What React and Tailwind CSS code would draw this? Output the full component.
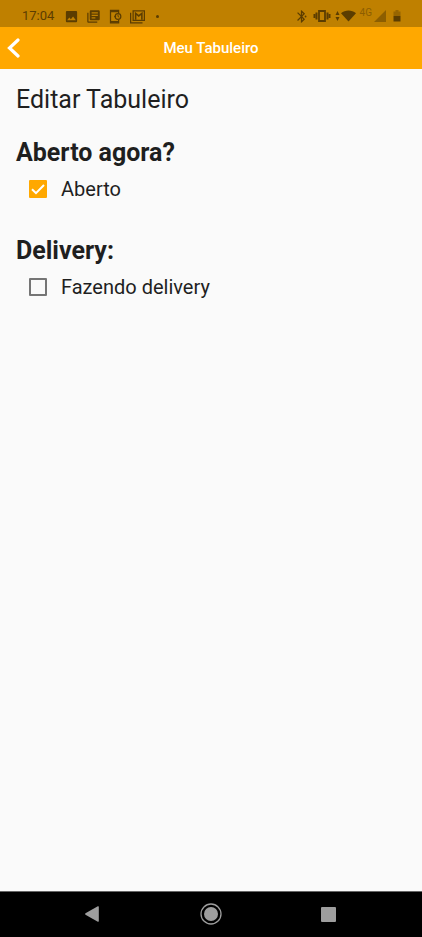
import { useState } from 'react'

function NotificationIcons() {
  return (
    <div className="flex items-center gap-[7px]">
      <svg className="h-[15px] w-[15px]" viewBox="0 0 24 24" fill="currentColor" aria-hidden="true">
        <path d="M21 19V5c0-1.1-.9-2-2-2H5c-1.1 0-2 .9-2 2v14c0 1.1.9 2 2 2h14c1.1 0 2-.9 2-2zM8.500 13.500l2.500 3.010L14.500 12l4.500 6H5l3.500-4.500z" />
      </svg>
      <svg className="h-[15px] w-[15px]" viewBox="0 0 24 24" fill="currentColor" aria-hidden="true">
        <path d="M4 6H2v14c0 1.1.9 2 2 2h14v-2H4V6zm16-4H8c-1.1 0-2 .9-2 2v12c0 1.1.9 2 2 2h12c1.1 0 2-.9 2-2V4c0-1.1-.9-2-2-2zm-1 9H9V9h10v2zm-4 4H9v-2h6v2zm4-8H9V5h10v2z" />
      </svg>
      <svg className="h-[15px] w-[15px]" viewBox="0 0 24 24" fill="none" stroke="currentColor" aria-hidden="true">
        <path d="M17 7V2H4v20h13v-5" strokeWidth="2" />
        <path d="M4 3.500h13M4 20.500h13" strokeWidth="3" />
        <circle cx="16" cy="12" r="4.500" strokeWidth="2" />
        <path d="M16 9v3l2 1" strokeWidth="1.500" />
        <path d="M10 12h3" strokeWidth="2" />
      </svg>
      <svg className="h-[15px] w-[15px]" viewBox="0 0 24 24" fill="none" stroke="currentColor" aria-hidden="true">
        <path d="M1 6v16h19" strokeWidth="2" />
        <path d="M5 3h18v15H5z" strokeWidth="2" />
        <path d="M9 17V7l5 4 5-4v10" strokeWidth="2.500" />
      </svg>
      <span className="ml-1 h-[3px] w-[3px] rounded-full bg-current" />
    </div>
  )
}

function SystemIcons() {
  return (
    <div className="flex items-center">
      <svg className="h-[15px] w-[15px]" viewBox="0 0 24 24" fill="currentColor" aria-hidden="true">
        <path d="M17.710 7.710L12 2h-1v7.590L6.410 5 5 6.410 10.590 12 5 17.590 6.410 19 11 14.410V22h1l5.710-5.710-4.300-4.290 4.300-4.290zM13 5.830l1.880 1.880L13 9.590V5.830zm1.880 10.460L13 18.170v-3.760l1.880 1.880z" />
        <circle cx="18.500" cy="12" r="1.500" />
      </svg>
      <svg className="ml-1 h-[16px] w-[18px]" viewBox="0 0 18 16" fill="none" stroke="currentColor" aria-hidden="true">
        <path d="M6 3h6v10H6z" strokeWidth="1.800" />
        <path d="M3.500 4.500v7M14.500 4.500v7" strokeWidth="2" />
        <path d="M1.500 6v4M16.500 6v4" strokeWidth="2" />
      </svg>
      <svg className="ml-1 h-[12px] w-[5px]" viewBox="0 0 5 12" fill="currentColor" aria-hidden="true">
        <path d="M2.500 1L4.500 5H.5zM2.500 11L4.500 7H.5z" />
      </svg>
      <svg className="ml-px h-[12px] w-[15px]" viewBox="0 0 15 12" fill="currentColor" aria-hidden="true">
        <path d="M7.500 11.500L0 3.200C4.200-.3 10.800-.3 15 3.200z" />
      </svg>
      <span className="ml-1 self-start text-[10px] leading-[10px] text-[#8d5e00]">4G</span>
      <svg className="ml-0.5 h-[12px] w-[12px] text-[#8d5e00]" viewBox="0 0 12 12" fill="currentColor" aria-hidden="true">
        <path d="M0 12L12 0v12z" />
      </svg>
      <svg className="ml-[7px] h-[12px] w-[8px]" viewBox="0 0 8 12" fill="currentColor" aria-hidden="true">
        <path d="M2.500 0h3v1.500H7.500V6h-7V1.500h2z" opacity=".4" />
        <path d="M.5 6h7v5.500h-7z" />
      </svg>
    </div>
  )
}

function StatusBar() {
  return (
    <div className="flex h-[27px] items-center justify-between bg-[#bf8000] pt-[5px] pr-[21px] pl-[22px] text-[#5c3d00]">
      <div className="flex items-center gap-[10px]">
        <span className="text-[13px] leading-4">17:04</span>
        <NotificationIcons />
      </div>
      <SystemIcons />
    </div>
  )
}

function AppBar() {
  return (
    <header className="grid h-[42px] grid-cols-[48px_1fr_48px] items-center bg-[#ffa800] text-white">
      <button type="button" aria-label="Voltar" className="flex h-full items-center pl-[7px]">
        <svg className="h-[20px] w-[14px]" viewBox="0 0 14 20" fill="none" stroke="currentColor" strokeWidth="3.200" strokeLinecap="round" aria-hidden="true">
          <path d="M11 2L2.500 10l8.500 8" />
        </svg>
      </button>
      <h1 className="text-center text-[15px] font-medium leading-5">Meu Tabuleiro</h1>
    </header>
  )
}

function CheckField({ title, label, checked, onChange }) {
  return (
    <fieldset>
      <legend className="text-[25px] font-bold leading-8">{title}</legend>
      <label className="flex h-10 items-center gap-[14px] pl-[13px] text-xl">
        <span className="grid h-[18px] w-[18px] place-items-center">
          <input
            type="checkbox"
            checked={checked}
            onChange={(e) => onChange(e.target.checked)}
            className="peer col-start-1 row-start-1 h-[18px] w-[18px] appearance-none rounded-[1px] border-2 border-[#757575] checked:border-[#ffa800] checked:bg-[#ffa800]"
          />
          <svg className="pointer-events-none col-start-1 row-start-1 hidden h-[18px] w-[18px] peer-checked:block" viewBox="0 0 18 18" fill="none" stroke="white" strokeWidth="2" aria-hidden="true">
            <path d="M3 9.200l4 4L15 5" />
          </svg>
        </span>
        {label}
      </label>
    </fieldset>
  )
}

function NavBar() {
  return (
    <nav className="grid h-[46px] grid-cols-[1fr_22px_1fr] items-center border-t border-[#666] bg-black px-[82px] pb-px text-[#9e9e9e]">
      <button type="button" aria-label="Voltar" className="w-[20px]">
        <svg className="h-[20px] w-[20px]" viewBox="0 0 20 20" fill="currentColor" aria-hidden="true">
          <path d="M3.500 9.300L15.800 2.300q1-.5 1 .6v14.200q0 1.100-1 .6L3.500 10.700q-1-.7 0-1.400z" />
        </svg>
      </button>
      <button type="button" aria-label="Início">
        <svg className="h-[22px] w-[22px]" viewBox="0 0 22 22" aria-hidden="true">
          <circle cx="11" cy="11" r="10" fill="none" stroke="currentColor" strokeWidth="1.300" />
          <circle cx="11" cy="11" r="7" fill="currentColor" />
        </svg>
      </button>
      <button type="button" aria-label="Recentes" className="mr-1 h-[15px] w-[15px] justify-self-end rounded-[1px] bg-[#9e9e9e]" />
    </nav>
  )
}

export default function App() {
  const [open, setOpen] = useState(true)
  const [delivery, setDelivery] = useState(false)

  return (
    <div className="flex min-h-screen flex-col bg-[#fafafa] font-['Roboto',sans-serif] text-[#1f1f1f]">
      <StatusBar />
      <AppBar />
      <main className="flex-1 px-4 pt-[15px]">
        <h2 className="text-[25px] leading-8">Editar Tabuleiro</h2>
        <form className="mt-[21px] flex flex-col gap-[26px]">
          <CheckField title="Aberto agora?" label="Aberto" checked={open} onChange={setOpen} />
          <CheckField title="Delivery:" label="Fazendo delivery" checked={delivery} onChange={setDelivery} />
        </form>
      </main>
      <NavBar />
    </div>
  )
}
